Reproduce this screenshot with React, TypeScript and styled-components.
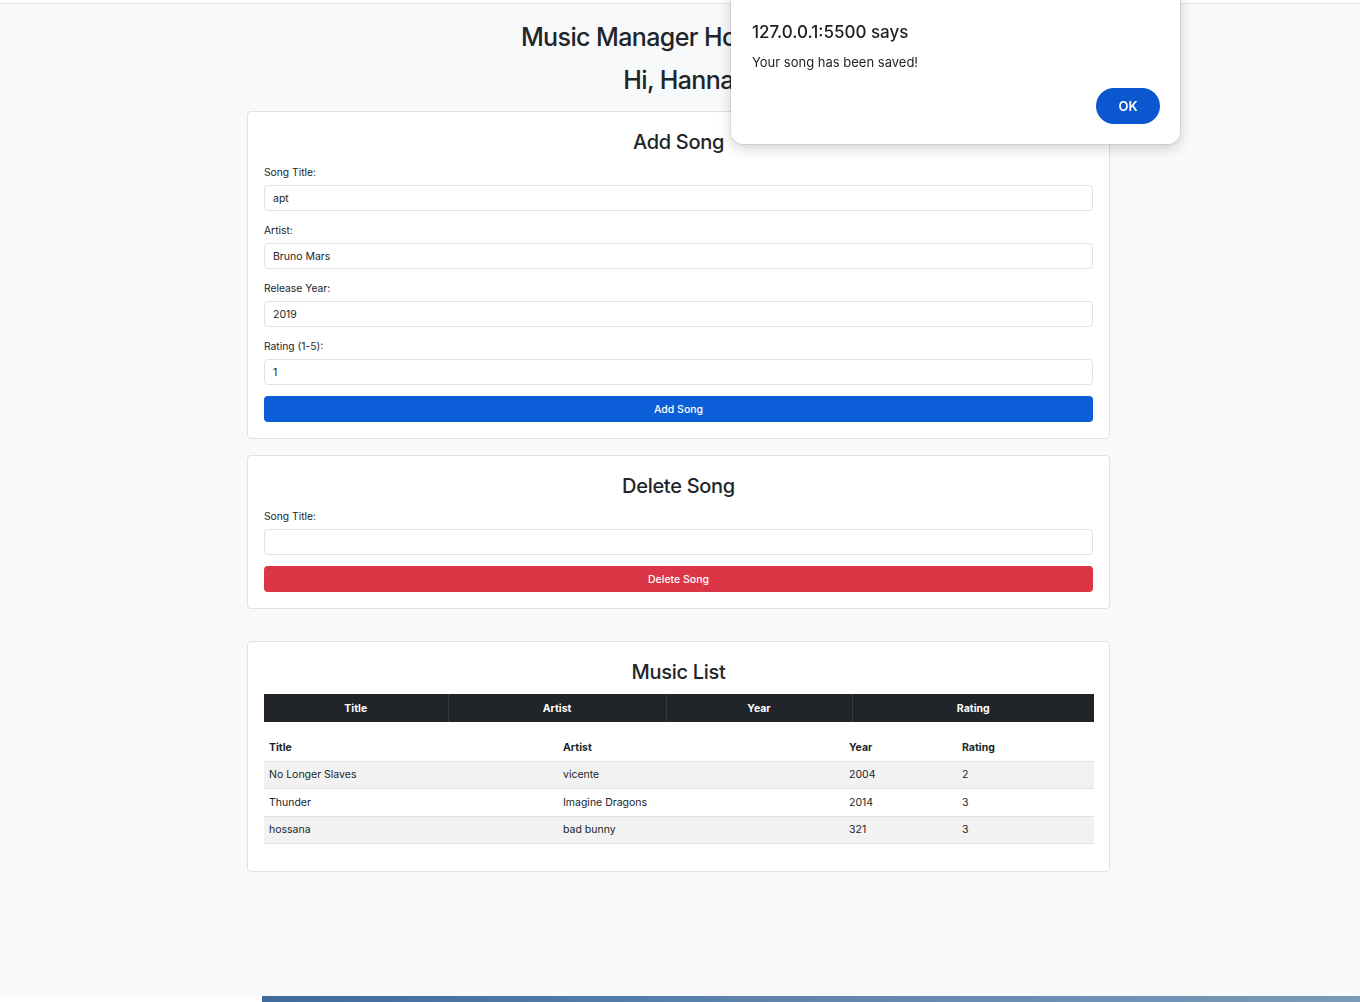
import React from "react";
import styled, { createGlobalStyle } from "styled-components";

const GlobalStyle = createGlobalStyle`
  html, body {
    margin: 0;
    padding: 0;
    height: 100%;
  }
  body {
    font-family: Inter, "Noto Sans", "Liberation Sans", sans-serif;
    color: #212529;
    background: #fff;
  }
  #root {
    min-height: 100%;
  }
  * {
    box-sizing: border-box;
  }
`;

const Shell = styled.div`
  display: flex;
  flex-direction: column;
  height: 1002px;
  overflow: hidden;
`;

const WindowEdge = styled.div`
  height: 4px;
  background: #fff;
  border-bottom: 1px solid #e3e3e3;
`;

const Page = styled.main`
  flex: 1;
  background: #f8f9fa;
  display: flex;
  flex-direction: column;
  align-items: center;
  padding: 17px 3px 0 0;
`;

const Heading = styled.h1<{ $gap: number }>`
  margin: 0 0 ${(p) => p.$gap}px;
  font-size: 25px;
  line-height: 32px;
  font-weight: 500;
  letter-spacing: -0.6px;
  text-align: center;
`;

const Column = styled.div`
  width: 863px;
  display: flex;
  flex-direction: column;
`;

const Card = styled.section<{ $after: number }>`
  background: #fff;
  border: 1px solid #dfe1e4;
  border-radius: 4px;
  padding: 15px 16px 16px;
  margin-bottom: ${(p) => p.$after}px;
`;

const CardTitle = styled.h2`
  margin: 2px 0 9px;
  font-size: 20px;
  line-height: 26px;
  font-weight: 500;
  letter-spacing: -0.3px;
  text-align: center;
`;

const Field = styled.div`
  display: flex;
  flex-direction: column;
  margin-bottom: 11px;
`;

const Label = styled.label`
  font-size: 10.3px;
  line-height: 16px;
  margin-bottom: 5px;
`;

const Input = styled.input`
  height: 26px;
  border: 1px solid #dee2e6;
  border-radius: 4px;
  padding: 0 8px;
  font-family: inherit;
  font-size: 10.5px;
  color: #212529;
  background: #fff;
  outline: none;
`;

const Button = styled.button<{ $tone: "primary" | "danger" }>`
  width: 100%;
  height: 26px;
  border: none;
  border-radius: 4px;
  background: ${(p) => (p.$tone === "primary" ? "#0b5ed7" : "#dc3545")};
  color: #fff;
  font-family: inherit;
  font-size: 10.5px;
  font-weight: 500;
  cursor: pointer;
`;

const Table = styled.table`
  width: 100%;
  border-collapse: collapse;
  table-layout: fixed;
  font-size: 10.5px;
`;

const DarkHead = styled.th<{ $w: number }>`
  width: ${(p) => p.$w}px;
  height: 28px;
  background: #212529;
  color: #fff;
  font-weight: 700;
  text-align: center;
  border-left: 1px solid #373b3e;
  &:first-child {
    border-left: none;
  }
`;

const Spacer = styled.div`
  height: 11px;
`;

const HeadCell = styled.th<{ $w: number }>`
  width: ${(p) => p.$w}px;
  height: 28px;
  padding: 1px 5px 0;
  text-align: left;
  font-weight: 700;
  border-bottom: 1px solid #dee2e6;
`;

const Row = styled.tr<{ $striped: boolean }>`
  background: ${(p) => (p.$striped ? "#f2f2f2" : "#fff")};
`;

const Cell = styled.td`
  height: 27.5px;
  padding: 0 5px;
  border-bottom: 1px solid #dee2e6;
`;

const TableEnd = styled.div`
  height: 11px;
`;

const Desktop = styled.div`
  height: 6px;
  display: flex;
  background: #fff;
`;

const DesktopStrip = styled.div`
  margin-left: 262px;
  flex: 1;
  background: linear-gradient(90deg, #3f6a9c 0%, #5d83ad 45%, #7a9ab8 100%);
`;

const Dialog = styled.div`
  position: fixed;
  top: -12px;
  left: 731px;
  width: 449px;
  height: 156px;
  background: #fff;
  border-radius: 12px;
  box-shadow: 0 0 0 1px rgba(0, 0, 0, 0.08), 0 4px 14px rgba(0, 0, 0, 0.18);
  padding: 34px 20px 20px 21px;
  display: flex;
  flex-direction: column;
`;

const DialogTitle = styled.div`
  font-size: 17px;
  line-height: 20px;
  font-weight: 500;
  color: #1f1f1f;
`;

const DialogText = styled.div`
  margin-top: 12px;
  font-size: 13px;
  line-height: 16px;
  color: #1f1f1f;
`;

const DialogActions = styled.div`
  margin-top: auto;
  display: flex;
  justify-content: flex-end;
`;

const OkButton = styled.button`
  width: 64px;
  height: 36px;
  border: none;
  border-radius: 18px;
  background: #0b57d0;
  color: #fff;
  font-family: inherit;
  font-size: 13px;
  font-weight: 600;
`;

const songs = [
  { title: "No Longer Slaves", artist: "vicente", year: 2004, rating: 2 },
  { title: "Thunder", artist: "Imagine Dragons", year: 2014, rating: 3 },
  { title: "hossana", artist: "bad bunny", year: 321, rating: 3 },
];

const darkCols = [
  { name: "Title", w: 184 },
  { name: "Artist", w: 218 },
  { name: "Year", w: 186 },
  { name: "Rating", w: 242 },
];

const listCols = [
  { name: "Title", w: 294 },
  { name: "Artist", w: 286 },
  { name: "Year", w: 113 },
  { name: "Rating", w: 137 },
];

export default function App() {
  return (
    <>
      <GlobalStyle />
      <Shell>
        <WindowEdge />
        <Page>
          <Heading $gap={11}>Music Manager Home Page</Heading>
          <Heading $gap={15}>Hi, Hanna</Heading>
          <Column>
            <Card $after={16}>
              <CardTitle>Add Song</CardTitle>
              <Field>
                <Label>Song Title:</Label>
                <Input defaultValue="apt" />
              </Field>
              <Field>
                <Label>Artist:</Label>
                <Input defaultValue="Bruno Mars" />
              </Field>
              <Field>
                <Label>Release Year:</Label>
                <Input defaultValue="2019" />
              </Field>
              <Field>
                <Label>Rating (1-5):</Label>
                <Input defaultValue="1" />
              </Field>
              <Button $tone="primary">Add Song</Button>
            </Card>

            <Card $after={32}>
              <CardTitle>Delete Song</CardTitle>
              <Field>
                <Label>Song Title:</Label>
                <Input />
              </Field>
              <Button $tone="danger">Delete Song</Button>
            </Card>

            <Card $after={0}>
              <CardTitle>Music List</CardTitle>
              <Table>
                <thead>
                  <tr>
                    {darkCols.map((c) => (
                      <DarkHead key={c.name} $w={c.w}>
                        {c.name}
                      </DarkHead>
                    ))}
                  </tr>
                </thead>
              </Table>
              <Spacer />
              <Table>
                <thead>
                  <tr>
                    {listCols.map((c) => (
                      <HeadCell key={c.name} $w={c.w}>
                        {c.name}
                      </HeadCell>
                    ))}
                  </tr>
                </thead>
                <tbody>
                  {songs.map((s, i) => (
                    <Row key={s.title} $striped={i % 2 === 0}>
                      <Cell>{s.title}</Cell>
                      <Cell>{s.artist}</Cell>
                      <Cell>{s.year}</Cell>
                      <Cell>{s.rating}</Cell>
                    </Row>
                  ))}
                </tbody>
              </Table>
              <TableEnd />
            </Card>
          </Column>
        </Page>
        <Desktop>
          <DesktopStrip />
        </Desktop>
      </Shell>

      <Dialog role="alertdialog">
        <DialogTitle>127.0.0.1:5500 says</DialogTitle>
        <DialogText>Your song has been saved!</DialogText>
        <DialogActions>
          <OkButton>OK</OkButton>
        </DialogActions>
      </Dialog>
    </>
  );
}
